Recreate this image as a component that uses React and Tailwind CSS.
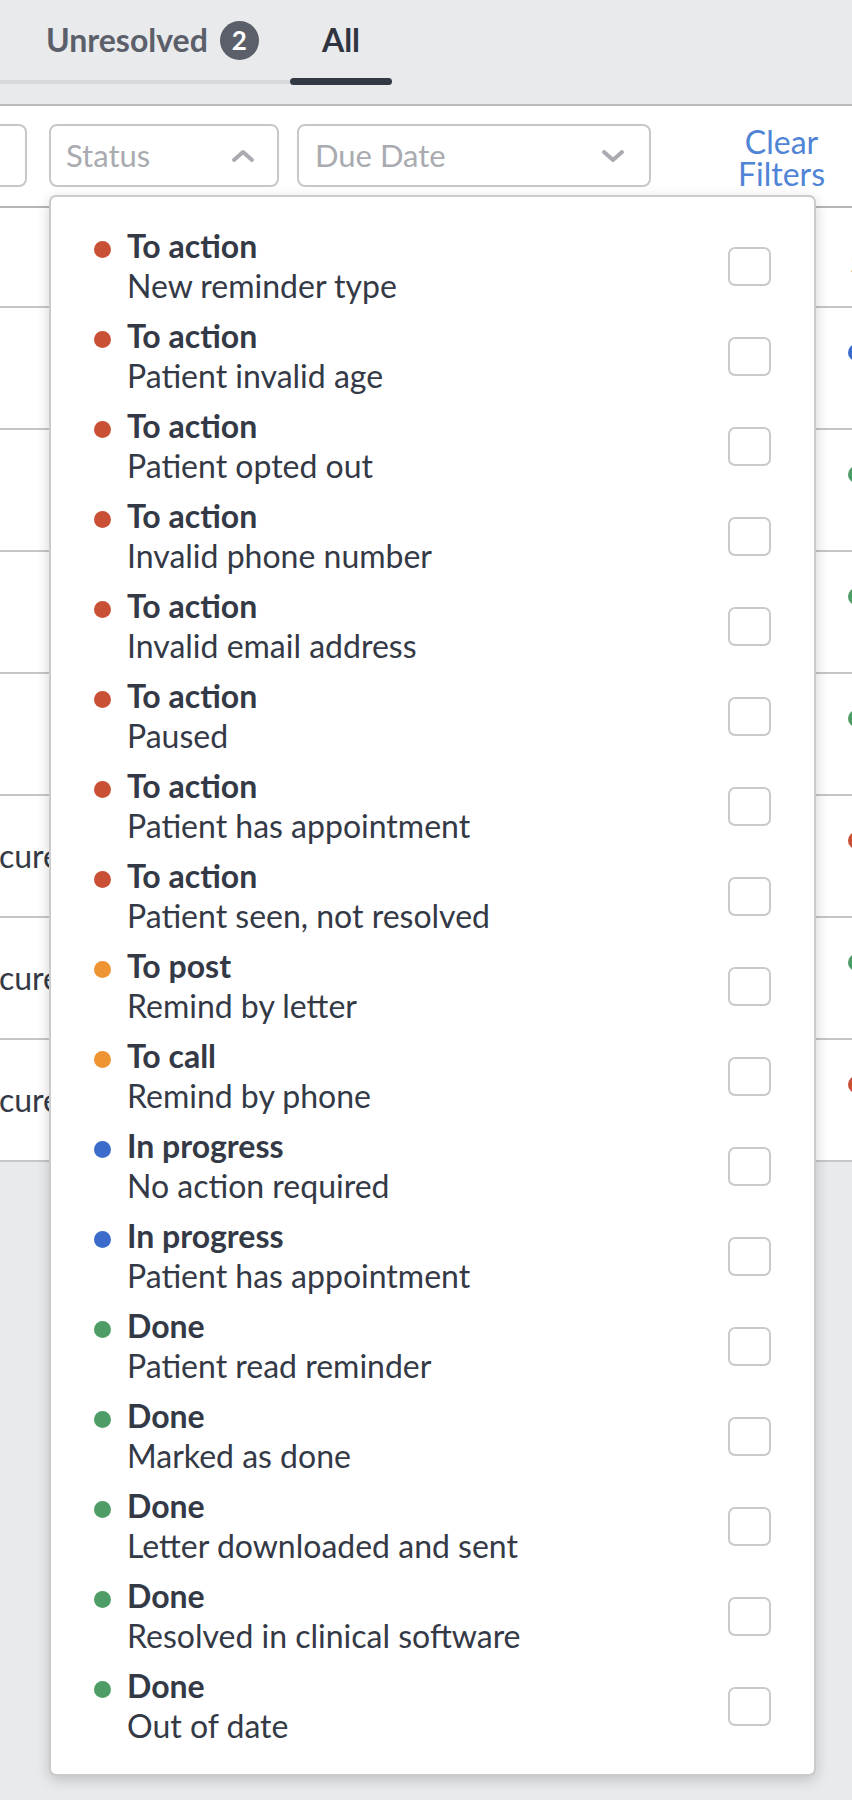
import React from 'react';

const ITEMS = [
  ['To action', 'New reminder type', 'red'],
  ['To action', 'Patient invalid age', 'red'],
  ['To action', 'Patient opted out', 'red'],
  ['To action', 'Invalid phone number', 'red'],
  ['To action', 'Invalid email address', 'red'],
  ['To action', 'Paused', 'red'],
  ['To action', 'Patient has appointment', 'red'],
  ['To action', 'Patient seen, not resolved', 'red'],
  ['To post', 'Remind by letter', 'orange'],
  ['To call', 'Remind by phone', 'orange'],
  ['In progress', 'No action required', 'blue'],
  ['In progress', 'Patient has appointment', 'blue'],
  ['Done', 'Patient read reminder', 'green'],
  ['Done', 'Marked as done', 'green'],
  ['Done', 'Letter downloaded and sent', 'green'],
  ['Done', 'Resolved in clinical software', 'green'],
  ['Done', 'Out of date', 'green'],
];

const DOT = {
  red: 'bg-[#c94f35]',
  orange: 'bg-[#ee9433]',
  blue: 'bg-[#3b6ccb]',
  green: 'bg-[#4f9d66]',
};

// rows behind the dropdown: [dot colour at right edge, text on left edge]
const ROWS = [
  ['blue', ''],
  ['green', ''],
  ['green', ''],
  ['green', ''],
  ['red', 'cure'],
  ['green', 'cure'],
  ['red', 'cure'],
];

function Chevron({ up }) {
  return (
    <svg width="24" height="14" viewBox="0 0 24 14" className="shrink-0">
      <polyline
        points={up ? '3,11 12,3 21,11' : '3,3 12,11 21,3'}
        fill="none"
        stroke="#a9abb0"
        strokeWidth="4"
        strokeLinecap="round"
        strokeLinejoin="round"
      />
    </svg>
  );
}

function StatusItem({ title, sub, color }) {
  return (
    <div className="flex items-center py-[5px] pl-[43px] pr-[43px]">
      <div className="flex-1">
        <div className="flex items-center h-[40px]">
          <span className={`w-[17px] h-[17px] rounded-full mt-[7px] mr-[16px] shrink-0 ${DOT[color]}`} />
          <span className="text-[32px] leading-[40px] font-bold text-[#343946]">{title}</span>
        </div>
        <div className="pl-[33px] text-[32px] leading-[40px] text-[#343946]">{sub}</div>
      </div>
      <div className="w-[43px] h-[39px] border-2 border-[#cacaca] rounded-[7px] bg-white shrink-0" />
    </div>
  );
}

export default function App() {
  return (
    <div className="relative w-[852px] min-h-[1800px] overflow-hidden bg-[#e9eaec] font-['Lato','Noto_Sans',sans-serif]">
      {/* Tabs */}
      <div className="flex h-[106px] border-b-2 border-[#b9babe]">
        <div className="w-[290px] flex flex-col pt-[20px]">
          <div className="flex items-center h-[40px] pl-[46px]">
            <span className="text-[32px] leading-[40px] font-bold text-[#5b5f6a]">Unresolved</span>
            <span className="ml-[12px] w-[39px] h-[39px] rounded-full bg-[#5b5f6a] text-white text-[26px] font-bold flex items-center justify-center">
              2
            </span>
          </div>
          <div className="mt-[20px] h-[4px] bg-[#d8d9dc]" />
        </div>
        <div className="w-[102px] flex flex-col pt-[20px]">
          <div className="h-[40px] text-center text-[32px] leading-[40px] font-bold text-[#2f3441]">All</div>
          <div className="mt-[18px] h-[7px] rounded-full bg-[#333845]" />
        </div>
      </div>

      {/* Filters */}
      <div className="bg-white h-[102px] border-b-2 border-[#b4b5b9] flex items-start pt-[18px]">
        <div className="shrink-0 w-[60px] ml-[-33px] h-[63px] border-2 border-[#c6c7c9] rounded-[8px]" />
        <div className="shrink-0 ml-[22px] w-[230px] h-[63px] border-2 border-[#c6c7c9] rounded-[8px] flex items-center justify-between pl-[15px] pr-[22px]">
          <span className="text-[31px] text-[#a9abb0]">Status</span>
          <Chevron up />
        </div>
        <div className="shrink-0 ml-[18px] w-[354px] h-[63px] border-2 border-[#c6c7c9] rounded-[8px] flex items-center justify-between pl-[16px] pr-[24px]">
          <span className="text-[31px] text-[#a9abb0]">Due Date</span>
          <Chevron />
        </div>
        <button className="ml-auto mr-[27px] pt-[2px] text-center text-[32px] leading-[32px] text-[#4f84d6]">
          Clear
          <br />
          Filters
        </button>
      </div>

      {/* Table */}
      <div className="bg-white">
        <div className="h-[100px] border-b-2 border-[#c5c6ca] flex justify-end">
          <span className="mt-[34px] mr-[-14px] text-[28px] font-bold text-[#343946]">S</span>
        </div>
        {ROWS.map(([c, txt], i) => (
          <div key={i} className="h-[122px] border-b-2 border-[#c5c6ca] flex justify-between">
            <span className="mt-[40px] ml-[-1px] text-[32px] leading-[40px] text-[#343946] whitespace-nowrap">
              {txt}
            </span>
            <span className={`mt-[36px] mr-[-13px] w-[17px] h-[17px] rounded-full ${DOT[c]}`} />
          </div>
        ))}
      </div>

      {/* Status dropdown */}
      <div className="absolute left-[49px] top-[195px] w-[767px] bg-white border-2 border-[#cbcbcb] rounded-[7px] pt-[24px] pb-[23px] shadow-[0_4px_14px_rgba(0,0,0,0.18)]">
        {ITEMS.map(([t, s, c], i) => (
          <StatusItem key={i} title={t} sub={s} color={c} />
        ))}
      </div>
    </div>
  );
}
